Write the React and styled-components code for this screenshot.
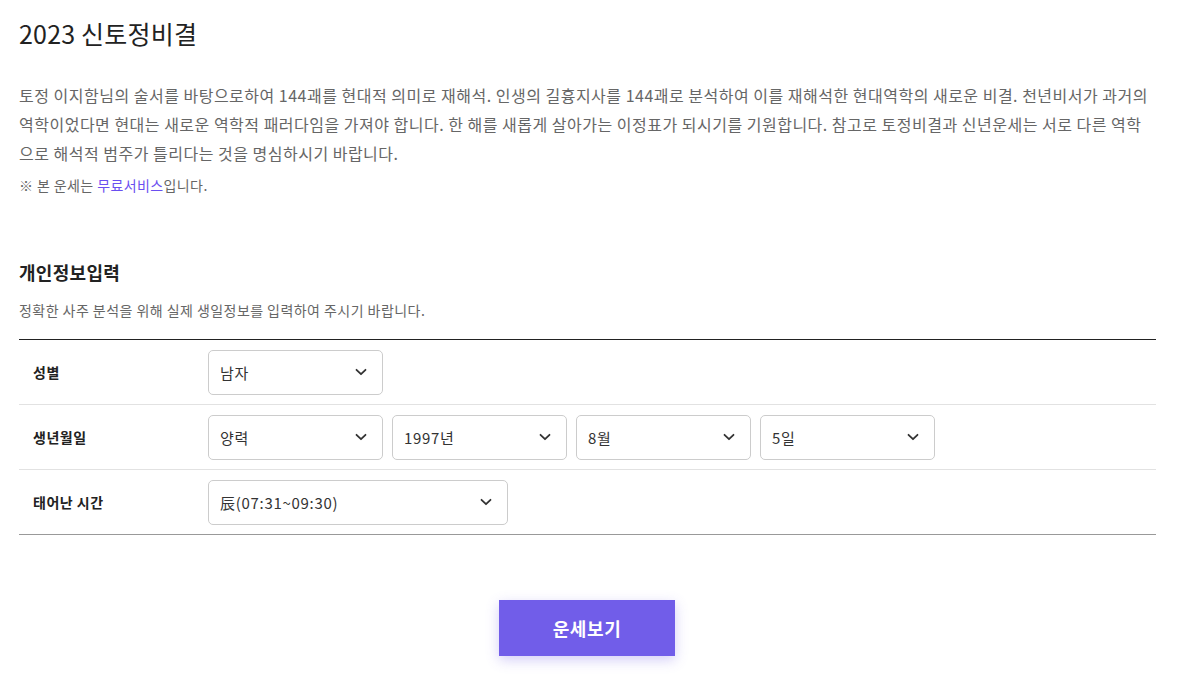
import React from "react";
import styled, { createGlobalStyle } from "styled-components";

const Global = createGlobalStyle`
  html, body { margin: 0; padding: 0; background: #fff; }
  body { font-family: "Noto Sans CJK KR", "Noto Sans", sans-serif; color: #222; }
  * { box-sizing: border-box; }
`;

const Page = styled.div`
  padding: 13px 23px 20px 19px;
`;

const Title = styled.h1`
  margin: 0;
  font-size: 25px;
  font-weight: 400;
  line-height: 40px;
  color: #222;
  letter-spacing: 0.2px;
`;

const Desc = styled.p`
  margin: 28px 0 0;
  font-size: 16px;
  line-height: 29px;
  color: #666;
  letter-spacing: 0.5px;
`;

const Note = styled.p`
  margin: 8px 0 0;
  font-size: 14px;
  line-height: 18px;
  color: #666;
  letter-spacing: 0.4px;
`;

const Link = styled.span`
  color: #6a4ff0;
`;

const SectionTitle = styled.h2`
  margin: 66px 0 0;
  font-size: 18px;
  font-weight: 700;
  line-height: 24px;
  color: #222;
  letter-spacing: 0.3px;
`;

const SectionSub = styled.p`
  margin: 16px 0 0;
  font-size: 14px;
  line-height: 20px;
  color: #666;
  letter-spacing: 0.45px;
`;

const Table = styled.div`
  margin-top: 19px;
  border-top: 1px solid #222;
  border-bottom: 1px solid #999;
`;

const Row = styled.div`
  display: grid;
  grid-template-columns: 189px 1fr;
  align-items: center;
  height: 64px;
  box-sizing: content-box;
  & + & { border-top: 1px solid #e2e2e2; }
`;

const Label = styled.div`
  padding-left: 14px;
  font-size: 14px;
  font-weight: 700;
  color: #222;
  letter-spacing: 0.5px;
`;

const Fields = styled.div`
  display: flex;
  gap: 9px;
`;

const Select = styled.div`
  width: ${(p) => p.$w || 175}px;
  height: 45px;
  border: 1px solid #ccc;
  border-radius: 5px;
  display: flex;
  align-items: center;
  justify-content: space-between;
  padding: 0 14px 0 11px;
  font-size: 15px;
  letter-spacing: 0.7px;
  color: #333;
  background: #fff;
`;

const Chevron = () => (
  <svg width="14" height="14" viewBox="0 0 14 14" fill="none">
    <path d="M2.5 4.8 L7 9.2 L11.5 4.8" stroke="#333" strokeWidth="1.8" strokeLinecap="round" strokeLinejoin="round" />
  </svg>
);

const Actions = styled.div`
  display: flex;
  justify-content: center;
  margin-top: 65px;
  padding-right: 1px;
`;

const Button = styled.button`
  width: 176px;
  height: 56px;
  border: none;
  background: #715de9;
  color: #fff;
  font-family: inherit;
  font-size: 18px;
  font-weight: 700;
  letter-spacing: 0.6px;
  box-shadow: 0 4px 12px rgba(113, 93, 233, 0.3);
  cursor: pointer;
`;

const Sel = ({ w, children }) => (
  <Select $w={w}>
    <span>{children}</span>
    <Chevron />
  </Select>
);

export default function App() {
  return (
    <Page>
      <Global />
      <Title>2023 신토정비결</Title>
      <Desc>
        토정 이지함님의 술서를 바탕으로하여 144괘를 현대적 의미로 재해석. 인생의 길흉지사를 144괘로 분석하여 이를 재해석한 현대역학의 새로운 비결. 천년비서가 과거의 역학이었다면 현대는 새로운 역학적 패러다임을 가져야 합니다. 한 해를 새롭게 살아가는 이정표가 되시기를 기원합니다. 참고로 토정비결과 신년운세는 서로 다른 역학으로 해석적 범주가 틀리다는 것을 명심하시기 바랍니다.
      </Desc>
      <Note>
        ※ 본 운세는 <Link>무료서비스</Link>입니다.
      </Note>
      <SectionTitle>개인정보입력</SectionTitle>
      <SectionSub>정확한 사주 분석을 위해 실제 생일정보를 입력하여 주시기 바랍니다.</SectionSub>
      <Table>
        <Row>
          <Label>성별</Label>
          <Fields>
            <Sel>남자</Sel>
          </Fields>
        </Row>
        <Row>
          <Label>생년월일</Label>
          <Fields>
            <Sel>양력</Sel>
            <Sel>1997년</Sel>
            <Sel>8월</Sel>
            <Sel>5일</Sel>
          </Fields>
        </Row>
        <Row>
          <Label>태어난 시간</Label>
          <Fields>
            <Sel w={300}>辰(07:31~09:30)</Sel>
          </Fields>
        </Row>
      </Table>
      <Actions>
        <Button>운세보기</Button>
      </Actions>
    </Page>
  );
}
